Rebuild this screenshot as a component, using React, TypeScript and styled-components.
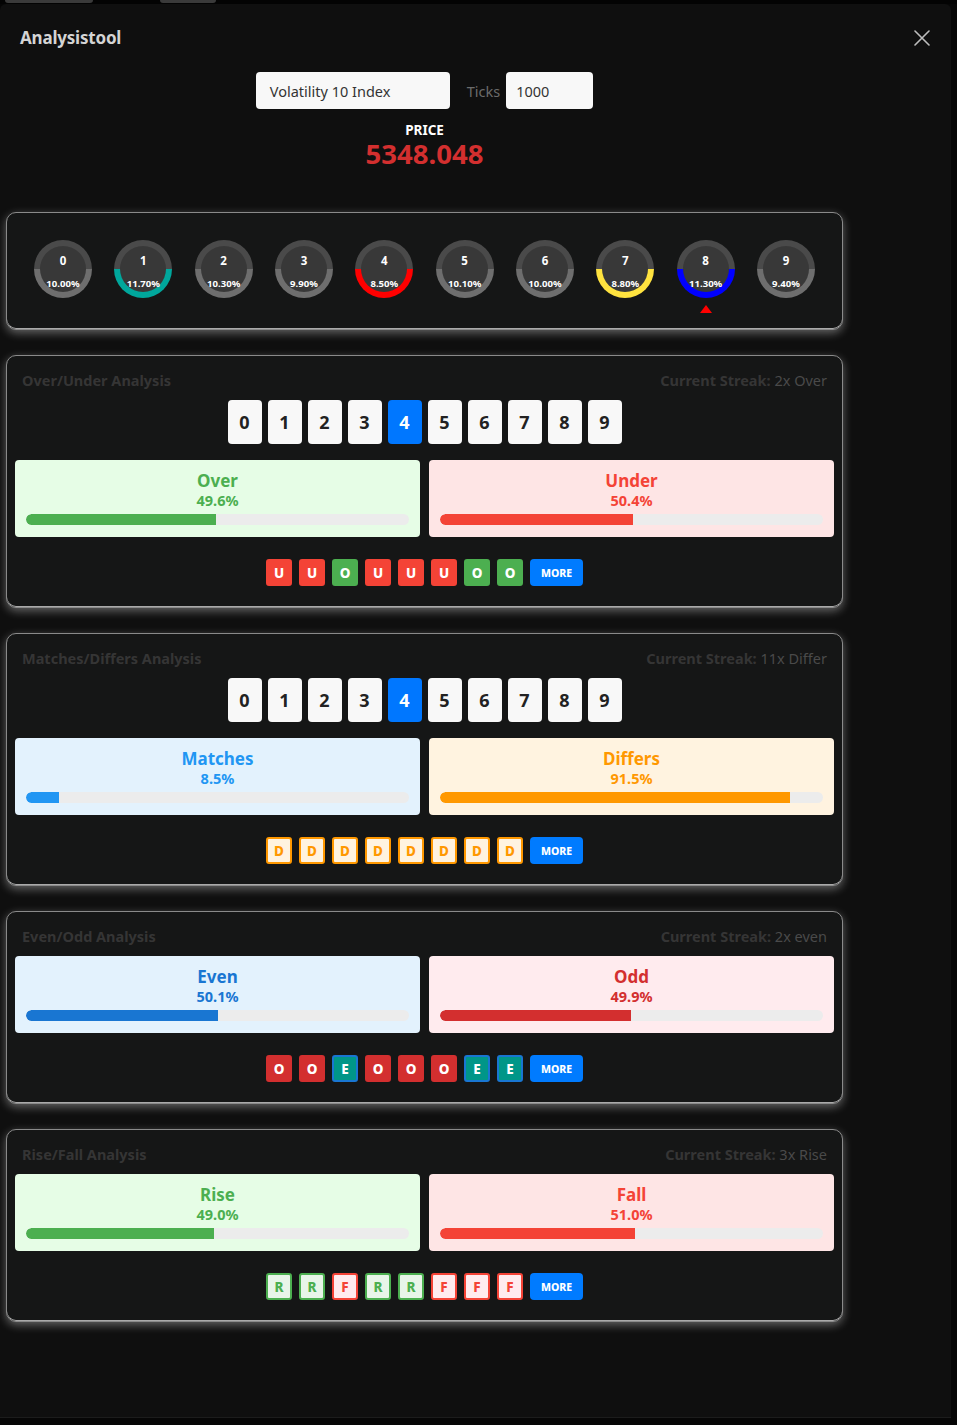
import styled, { createGlobalStyle } from 'styled-components';

const GlobalStyle = createGlobalStyle`
  html, body {
    margin: 0;
    padding: 0;
    background: #060606;
    font-family: 'Noto Sans', 'Open Sans', sans-serif;
  }
  * { box-sizing: border-box; }
`;

type Tone = {
  bg: string;
  fg: string;
  bar: string;
};

const TONES: Record<string, Tone> = {
  over: { bg: '#e6fde6', fg: '#4caf50', bar: '#4caf50' },
  under: { bg: '#fee5e5', fg: '#f44336', bar: '#f44336' },
  matches: { bg: '#e3f2fd', fg: '#2196f3', bar: '#2196f3' },
  differs: { bg: '#fff3e0', fg: '#ff9800', bar: '#ff9800' },
  even: { bg: '#e3f2fd', fg: '#1976d2', bar: '#1976d2' },
  odd: { bg: '#ffebee', fg: '#d32f2f', bar: '#d32f2f' },
  rise: { bg: '#e6fde6', fg: '#4caf50', bar: '#4caf50' },
  fall: { bg: '#fee5e5', fg: '#f44336', bar: '#f44336' },
};

type BadgeKind = 'solidRed' | 'solidGreen' | 'solidDark' | 'teal' | 'outOrange' | 'outGreen' | 'outRed';

const BADGE: Record<BadgeKind, { bg: string; fg: string; border: string }> = {
  solidRed: { bg: '#f44336', fg: '#fff', border: '#f44336' },
  solidGreen: { bg: '#4caf50', fg: '#fff', border: '#4caf50' },
  solidDark: { bg: '#d32f2f', fg: '#fff', border: '#d32f2f' },
  teal: { bg: '#009688', fg: '#fff', border: '#1976d2' },
  outOrange: { bg: '#fff3e0', fg: '#ff9800', border: '#ff9800' },
  outGreen: { bg: '#e8f5e9', fg: '#4caf50', border: '#4caf50' },
  outRed: { bg: '#ffebee', fg: '#f44336', border: '#f44336' },
};

const TopStrip = styled.div`
  height: 4px;
  display: flex;
  background: #030303;
`;

const StripTab = styled.div<{ $w: number; $ml: number }>`
  width: ${(p) => p.$w}px;
  margin-left: ${(p) => p.$ml}px;
  height: 3px;
  background: #3a3a3a;
  border-radius: 0 0 3px 3px;
`;

const Modal = styled.div`
  width: 951px;
  height: 1414px;
  background: #0f0f0f;
  border-radius: 6px 6px 0 0;
  border-bottom: 1px solid #1c1c1c;
  overflow: hidden;
`;

const Header = styled.div`
  display: flex;
  align-items: center;
  justify-content: space-between;
  padding: 20px 21px 0 20px;
  height: 48px;
`;

const Title = styled.h1`
  margin: 0;
  font-size: 17px;
  line-height: 28px;
  font-weight: 700;
  color: #d4d4d4;
  letter-spacing: -0.2px;
`;

const CloseButton = styled.button`
  background: none;
  border: none;
  padding: 0;
  width: 16px;
  height: 16px;
  display: flex;
  cursor: pointer;
`;

const Content = styled.div`
  width: 837px;
  margin-left: 6px;
`;

const Controls = styled.div`
  display: flex;
  align-items: center;
  justify-content: center;
  margin-top: 20px;
`;

const TextField = styled.div<{ $w: number; $pl: number }>`
  width: ${(p) => p.$w}px;
  height: 37px;
  background: #f8f8f8;
  border-radius: 4px;
  display: flex;
  align-items: center;
  padding: 0 10px 0 ${(p) => p.$pl}px;
  font-size: 14.5px;
  color: #333;
`;

const FieldLabel = styled.span`
  font-size: 14.5px;
  color: #6b6b6b;
  margin: 0 6px 0 17px;
`;

const PriceBlock = styled.div`
  display: flex;
  flex-direction: column;
  align-items: center;
  margin-top: 13px;
`;

const PriceLabel = styled.div`
  font-size: 13.5px;
  line-height: 16px;
  font-weight: 700;
  color: #fff;
`;

const PriceValue = styled.div`
  font-size: 27.5px;
  line-height: 32px;
  font-weight: 700;
  color: #d32f2f;
`;

const Cards = styled.div`
  display: flex;
  flex-direction: column;
  gap: 25px;
  margin-top: 42px;
`;

const Card = styled.section`
  background: #151616;
  border: 1px solid #8a8a8a;
  border-radius: 10px;
  box-shadow: 0 3px 10px rgba(230, 230, 230, 0.4), inset 0 -1px 0 #aaa;
  padding: 15px 8px 21px;
`;

const DigitCard = styled(Card)`
  padding: 27px 27px 31px;
  display: flex;
  justify-content: space-between;
`;

const Gauge = styled.div<{ $ring: string }>`
  position: relative;
  width: 58px;
  height: 58px;
  border-radius: 50%;
  padding: 6px;
  background: linear-gradient(to bottom, #4a4a4a 50%, ${(p) => p.$ring} 50%);
`;

const GaugeFace = styled.div`
  width: 100%;
  height: 100%;
  border-radius: 50%;
  background: #383838;
  display: flex;
  flex-direction: column;
  align-items: center;
  color: #fff;
  font-weight: 700;
`;

const GaugeDigit = styled.span`
  font-size: 11.5px;
  line-height: 12px;
  margin-top: 9px;
`;

const GaugePct = styled.span`
  font-size: 9.6px;
  line-height: 10px;
  margin-top: 12px;
`;

const Pointer = styled.div`
  position: absolute;
  left: 50%;
  top: 65px;
  transform: translateX(-50%);
  width: 0;
  height: 0;
  border-left: 6px solid transparent;
  border-right: 6px solid transparent;
  border-bottom: 8px solid #ff0000;
`;

const TitleRow = styled.div`
  display: flex;
  justify-content: space-between;
  align-items: center;
  padding: 0 7px;
  height: 18px;
  font-size: 14.5px;
  color: #353535;
`;

const CardTitle = styled.span`
  font-weight: 700;
`;

const Streak = styled.span`
  color: #4a4a4a;
  b {
    color: #353535;
    font-weight: 700;
  }
`;

const DigitRow = styled.div`
  display: flex;
  justify-content: center;
  gap: 6px;
  margin-top: 11px;
`;

const DigitButton = styled.button<{ $active?: boolean }>`
  width: 34px;
  height: 44px;
  border: none;
  border-radius: 4px;
  padding: 0;
  font-family: inherit;
  font-size: 18px;
  font-weight: 700;
  background: ${(p) => (p.$active ? '#0077ff' : '#f8f8f8')};
  color: ${(p) => (p.$active ? '#fff' : '#222')};
`;

const Split = styled.div<{ $gap: number }>`
  display: grid;
  grid-template-columns: 1fr 1fr;
  gap: 9px;
  margin-top: ${(p) => p.$gap}px;
`;

const StatBox = styled.div<{ $tone: Tone }>`
  background: ${(p) => p.$tone.bg};
  color: ${(p) => p.$tone.fg};
  border-radius: 4px;
  padding: 10px 11px 12px;
  display: flex;
  flex-direction: column;
  align-items: center;
  font-weight: 700;
`;

const StatName = styled.div`
  font-size: 17px;
  line-height: 21px;
`;

const StatPct = styled.div`
  font-size: 14.5px;
  line-height: 18px;
`;

const Track = styled.div`
  width: 100%;
  height: 11px;
  margin-top: 5px;
  background: #ececec;
  border-radius: 6px;
  overflow: hidden;
`;

const Fill = styled.div<{ $color: string }>`
  height: 100%;
  background: ${(p) => p.$color};
  border-radius: 6px 0 0 6px;
`;

const BadgeRow = styled.div`
  display: flex;
  justify-content: center;
  gap: 7px;
  margin-top: 22px;
`;

const Badge = styled.span<{ $kind: BadgeKind }>`
  width: 26px;
  height: 27px;
  border-radius: 3px;
  border: 2px solid ${(p) => BADGE[p.$kind].border};
  background: ${(p) => BADGE[p.$kind].bg};
  color: ${(p) => BADGE[p.$kind].fg};
  display: flex;
  align-items: center;
  justify-content: center;
  font-size: 13.5px;
  font-weight: 800;
`;

const MoreButton = styled.button`
  width: 53px;
  height: 27px;
  border: none;
  border-radius: 4px;
  background: #007bff;
  color: #fff;
  font-family: inherit;
  font-size: 10.5px;
  font-weight: 800;
  padding: 0;
`;

const gauges = [
  { d: 0, pct: '10.00%', ring: '#6e6e6e' },
  { d: 1, pct: '11.70%', ring: '#00a79c' },
  { d: 2, pct: '10.30%', ring: '#6e6e6e' },
  { d: 3, pct: '9.90%', ring: '#6e6e6e' },
  { d: 4, pct: '8.50%', ring: '#ff0000' },
  { d: 5, pct: '10.10%', ring: '#6e6e6e' },
  { d: 6, pct: '10.00%', ring: '#6e6e6e' },
  { d: 7, pct: '8.80%', ring: '#ffe33f' },
  { d: 8, pct: '11.30%', ring: '#0000ff', current: true },
  { d: 9, pct: '9.40%', ring: '#6e6e6e' },
];

type Side = { name: string; pct: number; tone: Tone };

type Section = {
  title: string;
  streakCount: string;
  streakLabel: string;
  digits: boolean;
  left: Side;
  right: Side;
  badges: [string, BadgeKind][];
};

const seq = (s: string, map: Record<string, BadgeKind>): [string, BadgeKind][] =>
  s.split('').map((c) => [c, map[c]]);

const sections: Section[] = [
  {
    title: 'Over/Under Analysis',
    streakCount: '2x',
    streakLabel: 'Over',
    digits: true,
    left: { name: 'Over', pct: 49.6, tone: TONES.over },
    right: { name: 'Under', pct: 50.4, tone: TONES.under },
    badges: seq('UUOUUUOO', { U: 'solidRed', O: 'solidGreen' }),
  },
  {
    title: 'Matches/Differs Analysis',
    streakCount: '11x',
    streakLabel: 'Differ',
    digits: true,
    left: { name: 'Matches', pct: 8.5, tone: TONES.matches },
    right: { name: 'Differs', pct: 91.5, tone: TONES.differs },
    badges: seq('DDDDDDDD', { D: 'outOrange' }),
  },
  {
    title: 'Even/Odd Analysis',
    streakCount: '2x',
    streakLabel: 'even',
    digits: false,
    left: { name: 'Even', pct: 50.1, tone: TONES.even },
    right: { name: 'Odd', pct: 49.9, tone: TONES.odd },
    badges: seq('OOEOOOEE', { O: 'solidDark', E: 'teal' }),
  },
  {
    title: 'Rise/Fall Analysis',
    streakCount: '3x',
    streakLabel: 'Rise',
    digits: false,
    left: { name: 'Rise', pct: 49.0, tone: TONES.rise },
    right: { name: 'Fall', pct: 51.0, tone: TONES.fall },
    badges: seq('RRFRRFFF', { R: 'outGreen', F: 'outRed' }),
  },
];

function StatCard({ side }: { side: Side }) {
  return (
    <StatBox $tone={side.tone}>
      <StatName>{side.name}</StatName>
      <StatPct>{side.pct.toFixed(1)}%</StatPct>
      <Track>
        <Fill $color={side.tone.bar} style={{ width: `${side.pct}%` }} />
      </Track>
    </StatBox>
  );
}

function AnalysisCard({ s }: { s: Section }) {
  return (
    <Card>
      <TitleRow>
        <CardTitle>{s.title}</CardTitle>
        <Streak>
          <b>Current Streak:</b> {s.streakCount} {s.streakLabel}
        </Streak>
      </TitleRow>
      {s.digits && (
        <DigitRow>
          {Array.from({ length: 10 }, (_, i) => (
            <DigitButton key={i} $active={i === 4}>
              {i}
            </DigitButton>
          ))}
        </DigitRow>
      )}
      <Split $gap={s.digits ? 16 : 11}>
        <StatCard side={s.left} />
        <StatCard side={s.right} />
      </Split>
      <BadgeRow>
        {s.badges.map(([c, k], i) => (
          <Badge key={i} $kind={k}>
            {c}
          </Badge>
        ))}
        <MoreButton>MORE</MoreButton>
      </BadgeRow>
    </Card>
  );
}

export default function App() {
  return (
    <>
      <GlobalStyle />
      <TopStrip>
        <StripTab $w={88} $ml={5} />
        <StripTab $w={56} $ml={67} />
      </TopStrip>
      <Modal>
        <Header>
          <Title>Analysistool</Title>
          <CloseButton aria-label="Close">
            <svg width="16" height="16" viewBox="0 0 16 16">
              <path d="M1 1L15 15M15 1L1 15" stroke="#bdbdbd" strokeWidth="1.6" strokeLinecap="round" />
            </svg>
          </CloseButton>
        </Header>
        <Content>
          <Controls>
            <TextField $w={194} $pl={14}>Volatility 10 Index</TextField>
            <FieldLabel>Ticks</FieldLabel>
            <TextField $w={87} $pl={10}>1000</TextField>
          </Controls>
          <PriceBlock>
            <PriceLabel>PRICE</PriceLabel>
            <PriceValue>5348.048</PriceValue>
          </PriceBlock>
          <Cards>
            <DigitCard>
              {gauges.map((g) => (
                <Gauge key={g.d} $ring={g.ring}>
                  <GaugeFace>
                    <GaugeDigit>{g.d}</GaugeDigit>
                    <GaugePct>{g.pct}</GaugePct>
                  </GaugeFace>
                  {g.current && <Pointer />}
                </Gauge>
              ))}
            </DigitCard>
            {sections.map((s) => (
              <AnalysisCard key={s.title} s={s} />
            ))}
          </Cards>
        </Content>
      </Modal>
    </>
  );
}
